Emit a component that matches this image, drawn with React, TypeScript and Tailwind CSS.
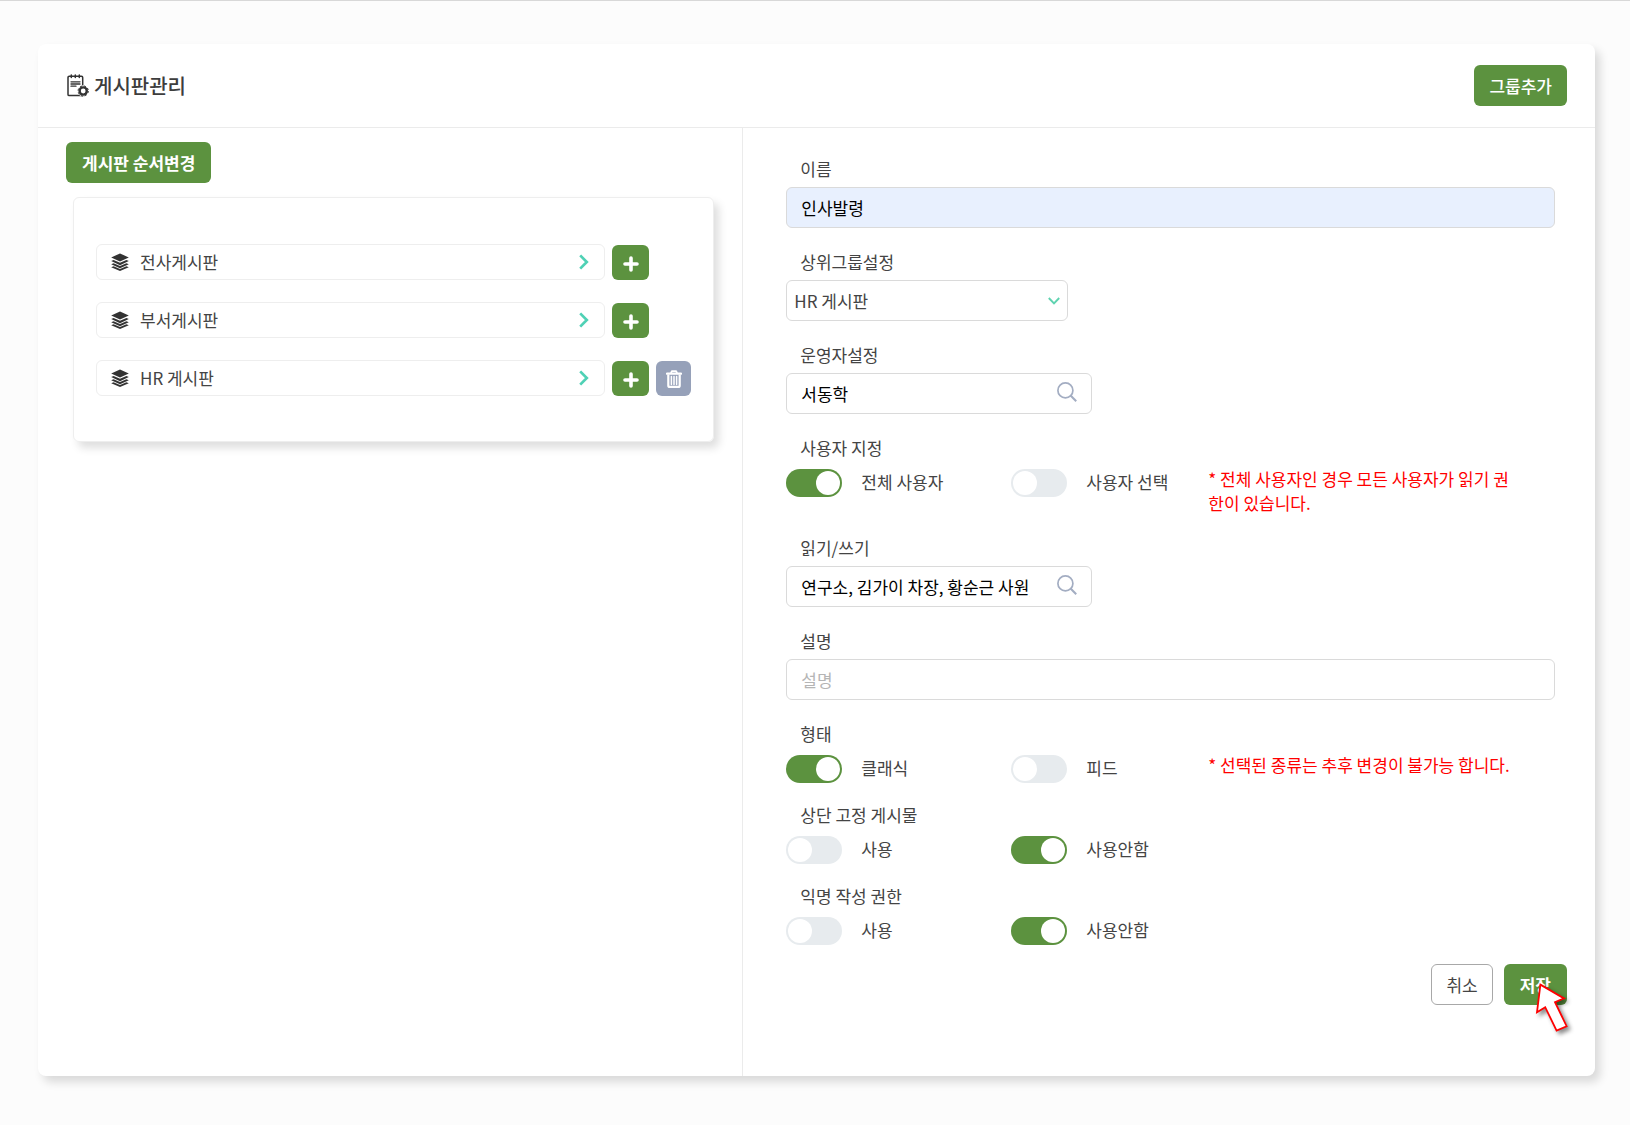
import { useState, type ReactNode } from "react";

type Board = { name: string; removable?: boolean };

const boards: Board[] = [
  { name: "전사게시판" },
  { name: "부서게시판" },
  { name: "HR 게시판", removable: true },
];

function BoardSettingsIcon() {
  return (
    <svg viewBox="0 0 22 23" className="h-[23px] w-[22px] shrink-0" fill="none" stroke="#333" strokeWidth="1.5" strokeLinecap="round" aria-hidden="true">
      <path d="M17 21.6H2.2a1.2 1.2 0 0 1-1.2-1.2V3.4a1.2 1.2 0 0 1 1.2-1.2h12.3a1.2 1.2 0 0 1 1.2 1.2V11" />
      <path d="M4.3 1v2.6M8.3 1v2.6M12.3 1v2.6" />
      <path d="M4 7.8h9M4 10h9M4 12.2h5" strokeWidth="1.3" />
      <circle cx="16.2" cy="17" r="5.6" fill="#fff" stroke="none" />
      <circle cx="16.2" cy="17" r="3.6" strokeWidth="2.4" />
      <circle cx="16.2" cy="17" r="5.1" strokeWidth="1" strokeDasharray="2.2 1.8" strokeLinecap="butt" />
    </svg>
  );
}

function LayersIcon() {
  return (
    <svg viewBox="0 0 18 18" className="h-[18px] w-[18px] shrink-0" fill="#333" aria-hidden="true">
      <path d="M9 .4 17.8 4.4 9 8.4.2 4.4z" />
      <path d="M.2 7.9 2.6 6.9 9 9.8l6.4-2.9 2.4 1L9 12.2z" />
      <path d="M.2 11.2 2.6 10.2 9 13.1l6.4-2.9 2.4 1L9 15.3z" />
      <path d="M.2 14.2 2.6 13.2 9 16l6.4-2.8 2.4 1L9 18z" />
    </svg>
  );
}

function ChevronIcon() {
  return (
    <svg viewBox="0 0 10 16" className="mb-px h-4 w-[10px] shrink-0" fill="none" stroke="#4fd1b5" strokeWidth="2.7" aria-hidden="true">
      <path d="M1.2 1.4 7.8 8l-6.6 6.6" />
    </svg>
  );
}

function PlusIcon() {
  return (
    <svg viewBox="0 0 16 16" className="mt-1 h-4 w-4" fill="none" stroke="#fff" strokeWidth="3.6" strokeLinecap="round" aria-hidden="true">
      <path d="M8 2v12M2 8h12" />
    </svg>
  );
}

function TrashIcon() {
  return (
    <svg viewBox="0 0 16 18" className="mt-0.5 h-[18px] w-4" fill="none" stroke="#fff" aria-hidden="true">
      <path d="M1 3.6h14" strokeWidth="2.2" strokeLinecap="round" />
      <path d="M4.8 3 6 1.2h4L11.2 3" strokeWidth="1.8" />
      <path d="M2.3 4.4v11c0 .9.6 1.5 1.5 1.5h8.4c.9 0 1.5-.6 1.5-1.5v-11" strokeWidth="2.2" />
      <path d="M5.4 6.6v7.8M8 6.6v7.8M10.6 6.6v7.8" strokeWidth="1.5" strokeLinecap="round" />
    </svg>
  );
}

function SearchIcon() {
  return (
    <svg viewBox="0 0 20 20" className="h-5 w-5" fill="none" stroke="#a3adc2" strokeWidth="1.7" aria-hidden="true">
      <circle cx="8.4" cy="8.4" r="7.5" />
      <path d="m13.6 13.6 5.6 5.6" strokeWidth="2.1" />
    </svg>
  );
}

function PointerArrow() {
  return (
    <svg viewBox="0 0 42 56" className="pointer-events-none absolute top-4 left-7 h-14 w-[42px] drop-shadow-[3px_3px_2px_rgba(0,0,0,0.45)]" aria-hidden="true">
      <path d="M8.4 4.6 32 18.4l-9 3.8L34.6 46.2l-10 4.4L13.2 27.2 5 32.2z" fill="#fff" stroke="#f00" strokeWidth="1.8" />
    </svg>
  );
}

const fieldBox = "h-[41px] w-full rounded-md border border-[#dadada] px-3.5 outline-none";

function Field({ id, label, children }: { id: string; label: string; children: ReactNode }) {
  return (
    <div className="mb-[22px]">
      <label htmlFor={id} className="mb-1.5 block pl-3.5">{label}</label>
      {children}
    </div>
  );
}

function SearchField({ id, label, value }: { id: string; label: string; value: string }) {
  return (
    <Field id={id} label={label}>
      <div className="flex h-[41px] max-w-[306px] items-center rounded-md border border-[#dadada] px-3.5">
        <input id={id} defaultValue={value} className="w-[229px] min-w-0 text-black outline-none" />
        <button type="button" aria-label={label + " 검색"} className="mb-1 ml-auto">
          <SearchIcon />
        </button>
      </div>
    </Field>
  );
}

function ToggleGroup({ name, label, options, initial, note }: { name: string; label: string; options: string[]; initial: number; note?: string }) {
  const [selected, setSelected] = useState(initial);
  return (
    <fieldset>
      <legend className="mb-[7px] pl-3.5">{label}</legend>
      <div className="flex items-start">
        {options.map((option, i) => (
          <label key={option} className="flex w-[225px] shrink-0 items-center pt-0.5 last-of-type:w-[197px]">
            <input
              type="radio"
              name={name}
              checked={selected === i}
              onChange={() => setSelected(i)}
              className="flex h-7 w-14 shrink-0 appearance-none items-center rounded-full bg-[#e7ebee] px-0.5 before:h-6 before:w-6 before:rounded-full before:bg-white checked:justify-end checked:bg-[#5c923f]"
            />
            <span className="pb-0.5 pl-[19px]">{option}</span>
          </label>
        ))}
        {note && <p className="min-w-0 flex-1 pr-9 text-[#f00]">{note}</p>}
      </div>
    </fieldset>
  );
}

export default function App() {
  return (
    <div className="min-h-screen border-t border-[#d8d8d8] bg-[#fcfcfc] pt-[43px] pr-[35px] pb-12 pl-[38px] font-['Noto_Sans_CJK_KR','Noto_Sans',sans-serif] text-[17px] leading-6 text-[#444]">
      <main className="flex min-h-[1032px] flex-col rounded-lg bg-white shadow-[5px_6px_10px_rgba(0,0,0,0.14)]">
        <header className="flex h-[84px] items-center justify-between border-b border-[#ebebeb] pr-7 pl-[29px]">
          <h1 className="flex items-center gap-[5px] text-[20px] font-medium text-[#3d3d3d]">
            <BoardSettingsIcon />
            게시판관리
          </h1>
          <button type="button" className="h-[41px] rounded-md bg-[#5c923f] px-[15px] font-medium text-white">그룹추가</button>
        </header>

        <div className="grid flex-1 grid-cols-[45.3fr_54.7fr]">
          <section className="border-r border-[#ebebeb] pt-3.5 pr-7 pl-7">
            <button type="button" className="h-[41px] rounded-md bg-[#5c923f] px-4 font-bold text-white">게시판 순서변경</button>
            <ul className="mt-3.5 ml-[7px] flex flex-col gap-[22px] rounded-md border border-[#eee] pt-[46px] pr-[22px] pb-[45px] pl-[22px] shadow-[5px_6px_9px_rgba(0,0,0,0.13)]">
              {boards.map((board) => (
                <li key={board.name} className="flex items-center gap-[7px]">
                  <button type="button" className="flex h-9 flex-1 items-center rounded-md border border-[#eee] pr-[15px] pl-3.5 text-left">
                    <LayersIcon />
                    <span className="flex-1 pl-[11px]">{board.name}</span>
                    <ChevronIcon />
                  </button>
                  <button type="button" aria-label={board.name + " 하위 추가"} className="flex h-[35px] w-[37px] items-center justify-center rounded-md bg-[#5c923f]">
                    <PlusIcon />
                  </button>
                  <div className="w-[35px]">
                    {board.removable && (
                      <button type="button" aria-label={board.name + " 삭제"} className="flex h-[35px] w-[35px] items-center justify-center rounded-md bg-[#96a1b9]">
                        <TrashIcon />
                      </button>
                    )}
                  </div>
                </li>
              ))}
            </ul>
          </section>

          <form className="pt-[29px] pr-10 pl-[43px]" onSubmit={(e) => e.preventDefault()}>
            <Field id="name" label="이름">
              <input id="name" defaultValue="인사발령" className={fieldBox + " bg-[#e8f0fe] text-black"} />
            </Field>
            <Field id="parent" label="상위그룹설정">
              <div className="relative max-w-[282px]">
                <select id="parent" defaultValue="HR 게시판" className="h-[41px] w-full appearance-none rounded-md border border-[#dadada] bg-white pl-[7px] outline-none">
                  {boards.map((board) => (
                    <option key={board.name}>{board.name}</option>
                  ))}
                </select>
                <svg viewBox="0 0 12 8" className="pointer-events-none absolute top-[17px] right-2 h-2 w-3" fill="none" stroke="#5fd3b0" strokeWidth="1.9" aria-hidden="true">
                  <path d="m.8 1 5.2 5.4L11.2 1" />
                </svg>
              </div>
            </Field>
            <SearchField id="manager" label="운영자설정" value="서동학" />
            <div className="mb-[21px]">
              <ToggleGroup name="users" label="사용자 지정" options={["전체 사용자", "사용자 선택"]} initial={0} note="* 전체 사용자인 경우 모든 사용자가 읽기 권한이 있습니다." />
            </div>
            <SearchField id="access" label="읽기/쓰기" value="연구소, 김가이 차장, 황순근 사원, 서동학" />
            <Field id="description" label="설명">
              <input id="description" placeholder="설명" className={fieldBox + " text-black placeholder:text-[#b5b5b5]"} />
            </Field>
            <div className="flex flex-col gap-5">
              <ToggleGroup name="type" label="형태" options={["클래식", "피드"]} initial={0} note="* 선택된 종류는 추후 변경이 불가능 합니다." />
              <ToggleGroup name="pinned" label="상단 고정 게시물" options={["사용", "사용안함"]} initial={1} />
              <ToggleGroup name="anonymous" label="익명 작성 권한" options={["사용", "사용안함"]} initial={1} />
            </div>
            <div className="mt-[19px] -mr-3 flex justify-end gap-[11px]">
              <button type="button" className="h-[41px] rounded-md border border-[#a8a8a8] bg-white px-3.5">취소</button>
              <div className="relative">
                <button type="submit" className="h-[41px] rounded-md bg-[#5c923f] px-4 font-bold text-white">저장</button>
                <PointerArrow />
              </div>
            </div>
          </form>
        </div>
      </main>
    </div>
  );
}
